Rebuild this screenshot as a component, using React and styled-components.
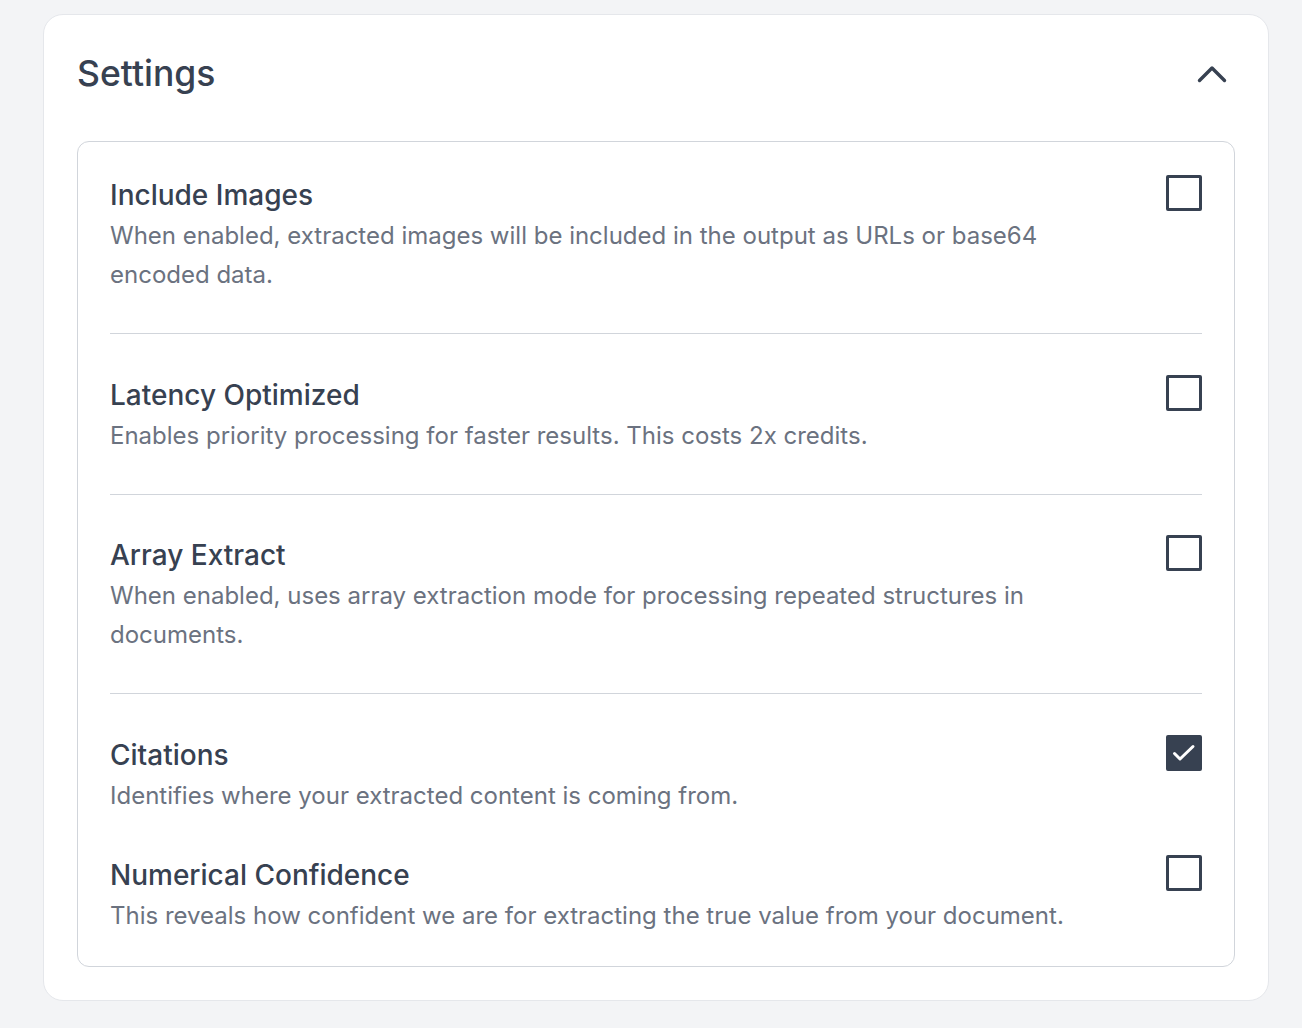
import React, { useState } from 'react'
import styled, { createGlobalStyle } from 'styled-components'

const GlobalStyle = createGlobalStyle`
  body {
    margin: 0;
    background: #f3f4f6;
    font-family: Inter, "Noto Sans", "Liberation Sans", sans-serif;
    -webkit-font-smoothing: antialiased;
  }
`

const Page = styled.div`
  padding: 14px 33px 28px 43px;
`

const Card = styled.section`
  background: #ffffff;
  border: 1px solid #e5e7eb;
  border-radius: 20px;
  padding: 33px;
`

const Header = styled.div`
  display: flex;
  align-items: center;
  justify-content: space-between;
  height: 48px;
  margin-top: 2px;
  margin-bottom: 43px;
`

const Title = styled.h2`
  margin: 0;
  font-size: 35.5px;
  line-height: 48px;
  font-weight: 500;
  color: #374151;
`

const Toggle = styled.button`
  display: flex;
  align-items: center;
  justify-content: center;
  width: 48px;
  height: 48px;
  margin-right: -1px;
  padding: 0;
  border: none;
  background: transparent;
  color: #374151;
  cursor: pointer;
`

const Panel = styled.div`
  border: 1.5px solid #d1d5db;
  border-radius: 12px;
  padding: 32px 32px 31px;
`

const Row = styled.div`
  display: flex;
  align-items: flex-start;
  gap: 40px;
  padding-top: ${(props) => (props.first ? '0' : '39.5px')};
  padding-bottom: ${(props) => (props.divider ? '39px' : '0')};
  border-bottom: ${(props) => (props.divider ? '1.5px solid #d1d5db' : 'none')};
`

const Text = styled.div`
  flex: 1;
  min-width: 0;
`

const Name = styled.div`
  font-size: 28px;
  line-height: 42px;
  font-weight: 500;
  color: #374151;
`

const Desc = styled.p`
  margin: 0;
  font-size: 24px;
  line-height: 39px;
  color: #6b7280;
`

const Box = styled.button`
  flex-shrink: 0;
  width: 36px;
  height: 36px;
  margin-top: 1px;
  padding: 0;
  border: 3px solid #374151;
  border-radius: 2px;
  background: ${(props) => (props.checked ? '#374151' : '#ffffff')};
  display: flex;
  align-items: center;
  justify-content: center;
  cursor: pointer;
`

const settings = [
  {
    name: 'Include Images',
    desc: 'When enabled, extracted images will be included in the output as URLs or base64 encoded data.',
    checked: false,
    divider: true,
  },
  {
    name: 'Latency Optimized',
    desc: 'Enables priority processing for faster results. This costs 2x credits.',
    checked: false,
    divider: true,
  },
  {
    name: 'Array Extract',
    desc: 'When enabled, uses array extraction mode for processing repeated structures in documents.',
    checked: false,
    divider: true,
  },
  {
    name: 'Citations',
    desc: 'Identifies where your extracted content is coming from.',
    checked: true,
    divider: false,
  },
  {
    name: 'Numerical Confidence',
    desc: 'This reveals how confident we are for extracting the true value from your document.',
    checked: false,
    divider: false,
  },
]

const Chevron = () => (
  <svg width="32" height="20" viewBox="0 0 32 20" fill="none">
    <polyline
      points="3.5,16.5 16,4 28.5,16.5"
      stroke="currentColor"
      strokeWidth="3.4"
      strokeLinecap="round"
      strokeLinejoin="round"
    />
  </svg>
)

const Check = () => (
  <svg width="30" height="30" viewBox="0 0 30 30" fill="none">
    <polyline
      points="5.5,15.5 11,21 24,8.5"
      stroke="#ffffff"
      strokeWidth="3"
      strokeLinecap="round"
      strokeLinejoin="round"
    />
  </svg>
)

const App = () => {
  const [values, setValues] = useState(settings.map((s) => s.checked))

  const toggle = (i) => {
    setValues((prev) => prev.map((v, j) => (j === i ? !v : v)))
  }

  return (
    <Page>
      <GlobalStyle />
      <Card>
        <Header>
          <Title>Settings</Title>
          <Toggle aria-label="Collapse settings">
            <Chevron />
          </Toggle>
        </Header>
        <Panel>
          {settings.map((s, i) => (
            <Row key={s.name} first={i === 0} divider={s.divider}>
              <Text>
                <Name>{s.name}</Name>
                <Desc>{s.desc}</Desc>
              </Text>
              <Box checked={values[i]} onClick={() => toggle(i)} aria-label={s.name}>
                {values[i] && <Check />}
              </Box>
            </Row>
          ))}
        </Panel>
      </Card>
    </Page>
  )
}

export default App
